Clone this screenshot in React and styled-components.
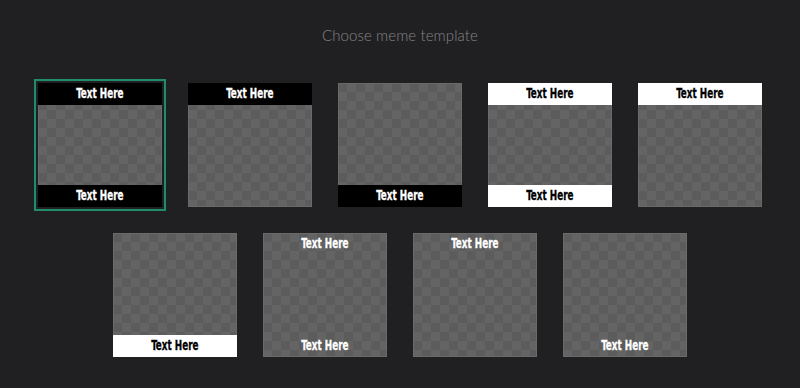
import React from "react";
import styled, { createGlobalStyle, css } from "styled-components";

const Global = createGlobalStyle`
  html, body { margin: 0; padding: 0; background: #202022; }
  body { font-family: "Lato", "Open Sans", sans-serif; }
`;

const Page = styled.div`
  width: 800px;
  height: 388px;
  box-sizing: border-box;
  padding-top: 26px;
  background: #202022;
  display: flex;
  flex-direction: column;
  align-items: center;
`;

const Title = styled.h2`
  margin: 0;
  font-family: "Lato", sans-serif;
  font-weight: 300;
  font-size: 15px;
  line-height: 18px;
  color: #858587;
  letter-spacing: 0.1px;
`;

const Grid = styled.div`
  margin-top: 39px;
  width: 800px;
  display: flex;
  flex-wrap: wrap;
  justify-content: center;
  column-gap: 25.5px;
  row-gap: 26px;
`;

const Card = styled.div`
  width: 124.5px;
  height: 124px;
  box-sizing: border-box;
  display: flex;
  flex-direction: column;
  justify-content: space-between;
  background-color: #5c5c5c;
  background-image:
    linear-gradient(45deg, #646464 25%, transparent 25%, transparent 75%, #646464 75%),
    linear-gradient(45deg, #646464 25%, transparent 25%, transparent 75%, #646464 75%);
  background-size: 18px 18px;
  background-position: 0 0, 9px 9px;
  box-shadow: inset 0 0 0 1px #6a6a6a;
  cursor: pointer;
  ${(p) =>
    p.$selected &&
    css`
      outline: 2px solid #1f8c6c;
      outline-offset: 2px;
    `}
`;

const Bar = styled.div`
  height: 22px;
  display: flex;
  align-items: center;
  justify-content: center;
  background: ${(p) =>
    p.$tone === "black" ? "#000" : p.$tone === "white" ? "#fff" : "transparent"};
  color: ${(p) => (p.$tone === "white" ? "#000" : "#fff")};
  visibility: ${(p) => (p.$hidden ? "hidden" : "visible")};
`;

const Caption = styled.span`
  font-family: "DejaVu Sans Condensed", "DejaVu Sans", sans-serif;
  font-weight: 700;
  font-size: 14px;
  letter-spacing: 0px;
  display: inline-block;
  transform: translateY(-1px) scaleX(0.7);
  line-height: 1;
  -webkit-text-stroke: 0.3px currentColor;
`;

const templates = [
  { top: "black", bottom: "black", selected: true },
  { top: "black", bottom: null },
  { top: null, bottom: "black" },
  { top: "white", bottom: "white" },
  { top: "white", bottom: null },
  { top: null, bottom: "white" },
  { top: "clear", bottom: "clear" },
  { top: "clear", bottom: null },
  { top: null, bottom: "clear" },
];

export default function App() {
  return (
    <>
      <Global />
      <Page>
        <Title>Choose meme template</Title>
        <Grid>
          {templates.map((t, i) => (
            <Card key={i} $selected={t.selected}>
              <Bar $tone={t.top} $hidden={!t.top}>
                <Caption>Text Here</Caption>
              </Bar>
              <Bar $tone={t.bottom} $hidden={!t.bottom}>
                <Caption>Text Here</Caption>
              </Bar>
            </Card>
          ))}
        </Grid>
      </Page>
    </>
  );
}
